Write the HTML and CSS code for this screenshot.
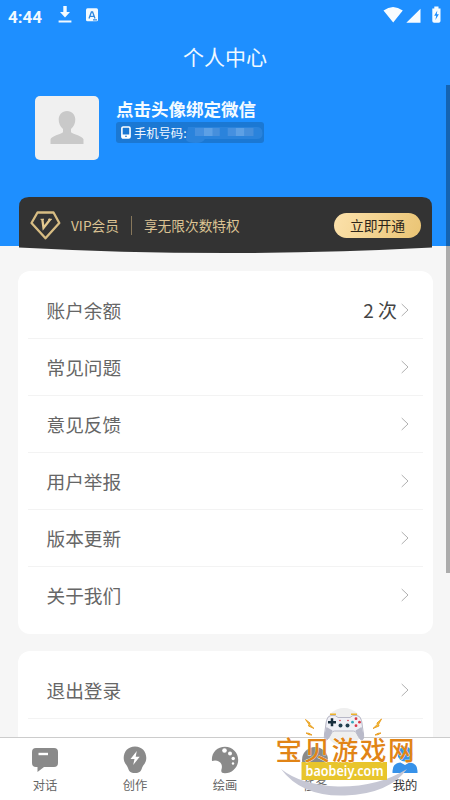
FILE: index.html
```html
<!DOCTYPE html>
<html lang="zh-CN">
<head>
<meta charset="utf-8">
<title>个人中心</title>
<link rel="stylesheet" href="styles.css">
</head>
<body>
<div class="screen">
  <header class="status">
    <span class="time">4:44</span>
    <svg class="download" width="14" height="18" viewBox="0 0 14 18"><path d="M5.3 0h3.4v6H12L7 11.6 2 6h3.3zM.6 14.4h12.8v2H.6z" fill="#f2faff"/></svg>
    <svg width="12" height="14" viewBox="0 0 12 14"><rect y=".3" width="12" height="13" rx="1.5" fill="#f2faff"/><path d="M3 10.5 5.4 4h1.2L9 10.5M4 8.3h4M7 11.8h4" fill="none" stroke="#2d87df" stroke-width="1.3"/></svg>
    <span class="grow"></span>
    <svg width="58" height="18" viewBox="0 0 58 18"><path d="M.5 4.5Q10-2.5 19.8 4.5L10.2 16.5zM37.5 2.8v14H23.3zM49.3 2.5h2V.6h4.2v1.9h2V15q0 1.8-1.8 1.8h-4.6Q49.3 16.800 49.300 15z" fill="#f7fcff"/><path d="M54.300 4.500 51.200 9.700h2l-.8 4.300 3.500-5.700h-2.100z" fill="#1e8fff"/></svg>
  </header>
  <h1>个人中心</h1>
  <main>
    <section class="profile">
      <div class="avatar"><svg width="34" height="34" viewBox="0 0 34 34"><path d="M17 0c5 0 8.300 3.800 8.300 8.500 0 4-1.500 6.700-4.300 9.500v3.300c2 2 12 3.700 12.500 7.200V33H.5v-4.500C1 25 11 23.300 13 21.300V18c-2.800-2.800-4.300-5.500-4.300-9.500C8.700 3.800 12 0 17 0z" fill="#c9c9c9"/></svg></div>
      <div class="info">
        <div class="bind">点击头像绑定微信</div>
        <div class="phone">
          <svg width="10" height="13" viewBox="0 0 10 13"><rect x=".9" y=".9" width="8.200" height="11.200" rx="1.300" fill="none" stroke="#fff" stroke-width="1.600"/><path d="M1 8.500h8V12H1z" fill="#fff"/><path d="M4 10.300h2" stroke="#1b78d3"/></svg>
          <span>手机号码:</span>
          <svg class="mask" width="80" height="21" viewBox="0 0 80 21"><path d="M3 5h69q6 0 6 6v1q0 5-6 5H20q-2 4-9 4-8 0-10-3z" fill="#2a83dc"/><path d="M10 6h9v8h-9zM43 6h8v8h-8z" fill="#4590e0"/><path d="M19 6h9v8h-9zM51 6h9v8h-9z" fill="#5da0e5"/><path d="M28 6h7v8h-7zM60 6h9v8h-9z" fill="#468fdc"/></svg>
        </div>
      </div>
    </section>
    <section class="vip">
      <svg class="vipbg" width="415" height="56" viewBox="0 0 415 56"><path d="M1 10Q1 0 11 0h393q10 0 10 10v40.500Q207 61.500 1 50.500z" fill="#333"/></svg>
      <svg class="gem" width="31" height="29" viewBox="0 0 31 29"><path d="M7.500 1.500h16L29.300 12 15.500 27.300 1.500 12z" fill="none" stroke="#d8bd83" stroke-width="2.300" stroke-linejoin="round"/><path d="M12.300 8 13.500 17 20.500 8" fill="none" stroke="#e3c88f" stroke-width="2.300"/><path d="M10.500 8.300h3.500M18 8.300h4" stroke="#e3c88f"/></svg>
      <span class="vipname">VIP会员</span><i class="sep"></i><span class="benefit">享无限次数特权</span>
      <button>立即开通</button>
    </section>
    <section class="card">
      <div class="row"><span>账户余额</span><b>2 次</b><svg class="arrow" viewBox="0 0 8 14"><path d="m.7 1 6.300 6-6.300 6"/></svg></div>
      <div class="row"><span>常见问题</span><svg class="arrow" viewBox="0 0 8 14"><path d="m.7 1 6.300 6-6.300 6"/></svg></div>
      <div class="row"><span>意见反馈</span><svg class="arrow" viewBox="0 0 8 14"><path d="m.7 1 6.300 6-6.300 6"/></svg></div>
      <div class="row"><span>用户举报</span><svg class="arrow" viewBox="0 0 8 14"><path d="m.7 1 6.300 6-6.300 6"/></svg></div>
      <div class="row"><span>版本更新</span><svg class="arrow" viewBox="0 0 8 14"><path d="m.7 1 6.300 6-6.300 6"/></svg></div>
      <div class="row last"><span>关于我们</span><svg class="arrow" viewBox="0 0 8 14"><path d="m.7 1 6.300 6-6.300 6"/></svg></div>
    </section>
    <section class="card more">
      <div class="row"><span>退出登录</span><svg class="arrow" viewBox="0 0 8 14"><path d="m.7 1 6.300 6-6.300 6"/></svg></div>
    </section>
  </main>
  <nav>
    <div class="tab"><svg viewBox="0 0 28 28"><path d="M5 2h18q4 0 4 4v11q0 4-4 4H13l-6.500 5v-5H5q-4 0-4-4V6q0-4 4-4z"/><path d="M7.500 8H17" stroke="#fff" stroke-width="2.400"/></svg><span>对话</span></div>
    <div class="tab"><svg viewBox="0 0 28 28"><path d="M14 .5C21 .5 25.300 5.500 25.300 12c0 5-3.300 7-4.300 10-.8 3-2.500 5-7 5s-6.200-2-7-5c-1-3-4.300-5-4.300-10C2.700 5.500 7 .5 14 .5z"/><path d="M15.800 5 9.500 13h4l-1.300 6 6.500-8.300h-4z" fill="#fff"/></svg><span>创作</span></div>
    <div class="tab"><svg viewBox="0 0 28 28"><path d="M1 15C0 7 6 .8 14 .8c7.500 0 13.200 6 13.200 13.200S21 27.300 14 27.300c-3 0-4.300-1-3.500-4C12.500 17 7 13 1 15z"/><g fill="#fff"><circle cx="13.500" cy="4.500" r="2.300"/><circle cx="19" cy="7.500" r="2"/><circle cx="22.200" cy="12.500" r="1.700"/><circle cx="22" cy="17.500" r="1.200"/></g></svg><span>绘画</span></div>
    <div class="tab"><svg viewBox="0 0 28 28"><circle cx="14" cy="14" r="13"/><path d="M7 21q7-8 14 0" stroke="#fff" stroke-width="2" fill="none"/></svg><span>任务</span></div>
    <div class="tab active"><svg viewBox="0 0 28 28"><circle cx="14" cy="8" r="7.500"/><path d="M1.500 27v-2q0-8 8-8.500l4.500 2.500 4.500-2.500q8 .5 8 8.500v2z"/></svg><span>我的</span></div>
  </nav>
  <div class="scrollbar"></div>
  <svg class="watermark" width="150" height="98" viewBox="0 0 150 98">
    <circle cx="74" cy="25" r="19" fill="#efefef"/>
    <path d="M61 13.500q-3.500.5-4.500 5L54.500 32q-.7 6 2 6 1.500 0 5-7 1-2 3-2h19q2 0 3 2 3.500 7 5 7 2.700 0 2-6l-2-13.500q-1-4.500-4.500-5-5-.8-7 2H68q-2-2.800-7-2z" fill="#f0f0f6" stroke="#a9a9bb" stroke-width=".8"/>
    <path d="M56.500 25 54.500 32q-.7 6 2 6 1.500 0 5-7l1-2.500zM91.500 25l2 7q.7 6-2 6-1.500 0-5-7l-1-2.500z" fill="#b9bac9"/>
    <path d="M60 12.300h6M81 12.300h6" stroke="#edb22c" stroke-width="1.600"/>
    <path d="M58 20.200h8M62 16.200v8" stroke="#182e3d" stroke-width="2.500"/>
    <circle cx="70.500" cy="23.500" r="2" fill="#233f50"/><circle cx="77.500" cy="23.500" r="2" fill="#233f50"/>
    <g fill="#d93849"><circle cx="86" cy="16.700" r="1.400"/><circle cx="89.500" cy="20.200" r="1.400"/><circle cx="86" cy="23.700" r="1.400"/><circle cx="70" cy="18.500" r=".8"/><circle cx="78" cy="18.500" r=".8"/></g><circle cx="82.500" cy="20.200" r="1.400" fill="#35a7bb"/>
    <path d="m35.500 17.500 4.500 3.500-.3 1.500 4.300 4-5.500-2.500.4-1.700zM36 31l3 .3 3 1.700-3-.3zM111.500 17l-4.500 4 .3 1.500-4.300 4 6-2.500-.4-1.700zM111 31l-3 .3-3 1.700 3-.3z" fill="#f5c33b" stroke="#e79a1d" stroke-width=".9"/>
    <path d="M11 67Q31 83 68 84.500 108 85 137 67 119 92 75 93.500 32 95 11 67z" fill="#c6c7d4"/>
    <rect x="31.500" y="60" width="85.500" height="18" fill="#e8c52c"/>
    <text class="site" x="35.500" y="73.500" textLength="78" lengthAdjust="spacingAndGlyphs">baobeiy.com</text>
    <text class="brand" x="5.500" y="57.500" textLength="139">宝贝游戏网</text>
  </svg>
</div>
</body>
</html>
```
FILE: styles.css
```css
* { box-sizing: border-box; }
body { margin: 0; font-family: "Noto Sans CJK SC", sans-serif; }
.screen {
  position: relative; display: flex; flex-direction: column;
  width: 450px; height: 800px; overflow: hidden;
  background: linear-gradient(#1e8fff 246px, #f6f6f6 246px);
}
.status { flex: none; display: flex; align-items: center; height: 32px; padding: 0 9px 2px 8px; }
.time { width: 50px; color: #f2faff; font: 700 17px/24px Roboto, sans-serif; padding-top: 3px; }
.download { margin-right: 14px; }
.grow { flex: 1; }
h1 { flex: none; height: 53px; margin: 0; color: #f0f9ff; font-size: 21px; font-weight: 400; line-height: 49px; text-align: center; }
main { flex: 1; min-height: 0; overflow: hidden; padding: 0 17px 0 18px; }
.profile { display: flex; height: 112px; padding: 11px 0 0 17px; }
.avatar { width: 64px; height: 64px; border-radius: 5px; background: #f0f0f0; display: flex; align-items: center; justify-content: center; }
.info { margin-left: 17px; }
.bind { color: #f5fbff; font-size: 17.5px; line-height: 26px; font-weight: 700; white-space: nowrap; }
.phone { display: flex; align-items: center; width: 148px; height: 21px; padding-left: 5px; border-radius: 3px; background: #1b78d3; color: #f0f7ff; font-size: 12.3px; white-space: nowrap; }
.phone span { margin-left: 3px; }
.mask { margin-left: -2px; }
.vip { position: relative; display: flex; align-items: center; height: 56px; padding: 0 12px 0 12px; color: #dcc393; font-size: 13.700px; white-space: nowrap; }
.vip > * { position: relative; }
.vip .vipbg { position: absolute; left: 0; top: 0; }
.vipname { margin-left: 10px; }
.sep { width: 1px; height: 19px; margin: 0 12px; background: #87775b; }
.vip button { width: 87px; height: 25px; margin-left: auto; padding: 0; border: 0; border-radius: 13px; background: linear-gradient(110deg, #fbe1ab, #eac474); color: #2c251a; font: 13.800px/24px "Noto Sans CJK SC", sans-serif; }
.card { margin-top: 18px; padding: 11px 10px 10px; border-radius: 12px; background: #fff; }
.card.more { margin-top: 17px; height: 110px; }
.row { display: flex; align-items: center; height: 57px; padding: 0 14px 0 18.500px; border-bottom: 1px solid #f3f3f3; color: #666; font-size: 18.700px; }
.row.last { border-color: transparent; }
.row span { flex: 1; padding-bottom: 2px; }
.row b { margin-right: 4px; padding-bottom: 1px; color: #444; font-size: 19px; font-weight: 400; }
.arrow { width: 8px; height: 14px; fill: none; stroke: #b0b0b0; stroke-width: 1; }
nav { flex: none; display: flex; height: 63px; border-top: 1px solid #ccc; background: #fff; }
.tab { flex: 1; display: flex; flex-direction: column; align-items: center; padding-top: 8px; color: #666; font-size: 12.3px; line-height: 18px; }
.tab svg { width: 28px; height: 28px; fill: #8a8a8a; }
.tab span { margin-top: 2px; }
.tab.active { color: #333; }
.tab.active svg { fill: #3792e9; }
.scrollbar { position: absolute; left: 446px; top: 85px; width: 4px; height: 488px; background: rgba(0, 0, 0, .3); }
.watermark { position: absolute; left: 270px; top: 702px; }
.site { fill: #fff; font: 600 13.500px "Noto Sans", sans-serif; }
.brand { fill: #e18416; stroke: #fff; stroke-width: .6px; paint-order: stroke; font: 500 26.500px "Noto Sans CJK SC", sans-serif; }
```
